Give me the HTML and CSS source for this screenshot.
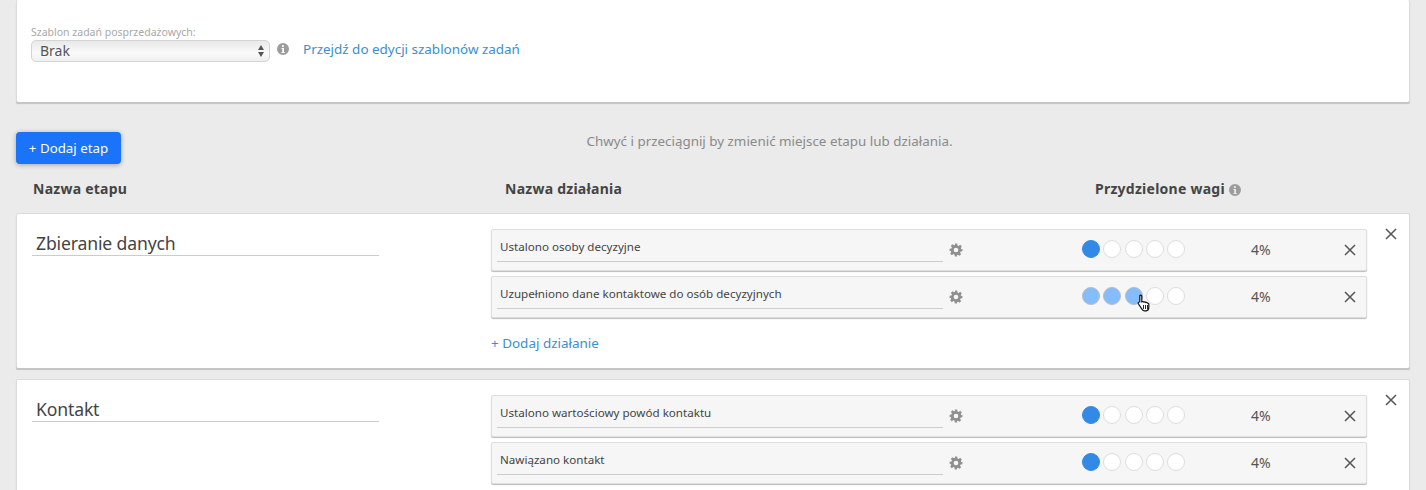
FILE: index.html
```html
<!DOCTYPE html>
<html lang="pl">
<head>
<meta charset="utf-8">
<title>Etapy</title>
<link rel="stylesheet" href="styles.css">
</head>
<body>
<svg class="defs" width="0" height="0" aria-hidden="true">
  <symbol id="gear" viewBox="0 0 24 24"><path fill-rule="evenodd" d="M10 1h4l.6 3.2 1.9.8 2.7-1.8 2.8 2.8-1.8 2.7.8 1.9L23 10v4l-3.2.6-.8 1.9 1.8 2.7-2.8 2.8-2.7-1.8-1.9.8L14 23h-4l-.6-3.2-1.9-.8-2.7 1.8-2.8-2.8 1.8-2.7-.8-1.9L1 14v-4l3.2-.6.8-1.9-1.8-2.7 2.8-2.8 2.7 1.8 1.9-.8zM12 8a4 4 0 1 0 0 8 4 4 0 0 0 0-8z"/></symbol>
  <symbol id="info" viewBox="0 0 24 24"><path fill-rule="evenodd" d="M12 0a12 12 0 1 1 0 24 12 12 0 0 1 0-24zm-.2 4a2.2 2.2 0 1 0 0 4.4 2.2 2.2 0 0 0 0-4.4zM9 10v2h1.500v6H9v2h6.500v-2H14v-8z"/></symbol>
  <symbol id="close" viewBox="0 0 12 12"><path d="M1 1l10 10M11 1L1 11" fill="none" stroke="currentColor" stroke-width="1.500"/></symbol>
</svg>

<section class="card top-card">
  <div class="template-field">
    <label class="small-label">Szablon zadań posprzedażowych:</label>
    <div class="template-row">
      <div class="select">
        <span>Brak</span>
        <span class="arrows"><i class="up"></i><i class="down"></i></span>
      </div>
      <svg class="info"><use href="#info"/></svg>
      <a class="link template-link">Przejdź do edycji szablonów zadań</a>
    </div>
  </div>
</section>

<div class="toolbar">
  <button class="add-stage">+ Dodaj etap</button>
  <p class="hint">Chwyć i przeciągnij by zmienić miejsce etapu lub działania.</p>
</div>

<div class="col-heads">
  <div class="head-stage">Nazwa etapu</div>
  <div class="head-action">Nazwa działania</div>
  <div class="head-weights">Przydzielone wagi <svg class="info small"><use href="#info"/></svg></div>
</div>

<section class="card stage">
  <div class="stage-name"><div class="stage-input">Zbieranie danych</div></div>
  <div class="actions">
    <div class="action">
      <div class="action-input">Ustalono osoby decyzyjne</div>
      <svg class="gear"><use href="#gear"/></svg>
      <div class="dots"><b class="dot on"></b><b class="dot"></b><b class="dot"></b><b class="dot"></b><b class="dot"></b></div>
      <div class="pct">4%</div>
      <svg class="x"><use href="#close"/></svg>
    </div>
    <div class="action">
      <div class="action-input">Uzupełniono dane kontaktowe do osób decyzyjnych</div>
      <svg class="gear"><use href="#gear"/></svg>
      <div class="dots">
        <b class="dot hover"></b><b class="dot hover"></b><b class="dot hover"></b><b class="dot"></b><b class="dot"></b>
        <svg class="cursor" viewBox="0 0 14 18"><path d="M3.500 1.200c.8 0 1.300.6 1.300 1.400v5.200l.6-.2c.7-.2 1.300 0 1.600.5.600-.3 1.300-.2 1.700.4.600-.3 1.400-.1 1.700.6.700-.1 1.400.4 1.400 1.200v3.200c0 1.700-1 3-2.600 3.300H7.500c-1.100 0-1.800-.6-2.400-1.500L1.500 10c-.5-.7-.3-1.500.3-1.800.5-.3 1.100-.1 1 .1V2.600c0-.8-.1-1.400.7-1.400z" fill="#fff" stroke="#111" stroke-width="1.200"/><path d="M6.500 11v4M8.500 11v4M10.500 11v4" stroke="#111" stroke-width=".9"/></svg>
      </div>
      <div class="pct">4%</div>
      <svg class="x"><use href="#close"/></svg>
    </div>
    <a class="link add-action">+ Dodaj działanie</a>
  </div>
  <svg class="x stage-x"><use href="#close"/></svg>
</section>

<section class="card stage">
  <div class="stage-name"><div class="stage-input">Kontakt</div></div>
  <div class="actions">
    <div class="action">
      <div class="action-input">Ustalono wartościowy powód kontaktu</div>
      <svg class="gear"><use href="#gear"/></svg>
      <div class="dots"><b class="dot on"></b><b class="dot"></b><b class="dot"></b><b class="dot"></b><b class="dot"></b></div>
      <div class="pct">4%</div>
      <svg class="x"><use href="#close"/></svg>
    </div>
    <div class="action">
      <div class="action-input">Nawiązano kontakt</div>
      <svg class="gear"><use href="#gear"/></svg>
      <div class="dots"><b class="dot on"></b><b class="dot"></b><b class="dot"></b><b class="dot"></b><b class="dot"></b></div>
      <div class="pct">4%</div>
      <svg class="x"><use href="#close"/></svg>
    </div>
  </div>
  <svg class="x stage-x"><use href="#close"/></svg>
</section>
</body>
</html>
```
FILE: styles.css
```css
* { box-sizing: border-box; }
html, body { margin: 0; height: 490px; overflow: hidden; }
body {
  padding: 0 16px;
  background: #ebebeb;
  font-family: "Noto Sans", "Open Sans", sans-serif;
  color: #444;
}
.defs { position: absolute; }
.card {
  background: #fff;
  border: 1px solid #dcdcdc;
  border-bottom: 0;
  border-radius: 2px;
  box-shadow: 0 2px 1px -0.5px #c4c4c4;
}
.top-card { height: 102px; padding: 26px 15px 0 14px; border-top: 0; }
.small-label { display: block; font-size: 10.5px; line-height: 13px; color: #a8a8a8; }
.template-row { display: flex; align-items: center; margin-top: 1px; }
.select {
  width: 239px; height: 22px;
  display: flex; align-items: center; justify-content: space-between;
  padding: 0 5px 2px 8px;
  border: 1px solid #d4d4d4; border-radius: 5px;
  background: linear-gradient(#e9e9e9, #fafafa 60%, #efefef);
  font-size: 14px; color: #555;
}
.arrows { display: flex; flex-direction: column; gap: 2px; padding-top: 2px; }
.arrows i { display: block; width: 0; height: 0; border-left: 3px solid transparent; border-right: 3px solid transparent; }
.arrows .up { border-bottom: 5px solid #555; }
.arrows .down { border-top: 5px solid #555; }
.info { width: 12px; height: 12px; fill: #9c9c9c; margin: -4px 0 0 7px; flex: none; }
.info.small { width: 12px; height: 12px; margin: 0 0 -2px 1px; }
.link { color: #3b8fd0; font-size: 13.45px; }
.template-link { margin: -5px 0 0 14px; }
.toolbar { display: flex; align-items: flex-start; margin-top: 30px; height: 32px; }
.add-stage {
  width: 105px; height: 32px; padding: 0;
  border: 0; border-radius: 4px;
  background: #1a73f8; color: #fff;
  font: 13.3px "Noto Sans", sans-serif;
  box-shadow: 0 1px 5px rgba(0,0,0,.3);
}
.hint { flex: 1; margin: 0; padding-left: 8px; text-align: center; font-size: 13.4px; line-height: 19px; color: #8a8a8a; }
.col-heads { display: flex; margin-top: 15px; height: 20px; padding-left: 17px; font-size: 14px; font-weight: 700; line-height: 20px; letter-spacing: .25px; color: #444; }
.head-stage { width: 472px; }
.head-action { width: 590px; }
.head-weights { display: flex; align-items: center; gap: 3px; }
.stage { position: relative; display: flex; height: 155px; margin-bottom: 11px; padding: 15px 0 0 15px; }
.col-heads + .stage { margin-top: 14px; }
.stage-name { width: 459px; flex: none; }
.stage-input { width: 347px; height: 27px; padding-left: 4px; border-bottom: 1px solid #ccc; font-size: 17.6px; letter-spacing: -.15px; line-height: 29px; color: #444; }
.actions { width: 876px; display: flex; flex-direction: column; gap: 5px; }
.action {
  display: flex; align-items: center;
  height: 42px; padding-left: 5px;
  background: #f6f6f6;
  border: 1px solid #dedede; border-radius: 2px;
  box-shadow: 0 1px 1px #bbb;
}
.action-input { width: 446px; height: 28px; margin-top: -4px; padding-left: 3px; border-bottom: 1px solid #ccc; font-size: 11.6px; line-height: 26px; color: #444; }
.gear { width: 14px; height: 14px; margin-left: 6px; fill: #8f8f8f; flex: none; }
.dots { position: relative; display: flex; gap: 3.25px; width: 103px; margin: -2px 0 0 119px; flex: none; }
.dot { width: 18px; height: 18px; border-radius: 50%; border: 1px solid #ddd; background: #fff; flex: none; }
.dot.on { background: #3389e6; border-color: #3389e6; }
.dot.hover { background: #85bdfc; border-color: #b5bcc6; }
.cursor { position: absolute; left: 55px; top: 7px; width: 14px; height: 18px; }
.pct { width: 50px; margin: -2px 0 0 66px; font-size: 14px; color: #555; }
.x { width: 12px; height: 12px; margin-left: 43px; color: #555; flex: none; }
.stage-x { position: absolute; right: 12px; top: 14px; margin: 0; }
.add-action { margin-top: 11px; line-height: 19px; }
```
